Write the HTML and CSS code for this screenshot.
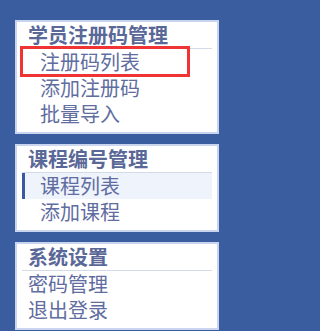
FILE: index.html
```html
<!DOCTYPE html>
<html lang="zh">
<head>
<meta charset="utf-8">
<title>菜单</title>
<link rel="stylesheet" href="styles.css">
</head>
<body>
<div class="sidebar">
  <div class="menu-box">
    <div class="menu-title">学员注册码管理</div>
    <ul class="menu-list">
      <li class="menu-item">注册码列表</li>
      <li class="menu-item">添加注册码</li>
      <li class="menu-item">批量导入</li>
    </ul>
    <span class="mark"></span>
  </div>
  <div class="menu-box">
    <div class="menu-title">课程编号管理</div>
    <ul class="menu-list">
      <li class="menu-item active">课程列表</li>
      <li class="menu-item">添加课程</li>
    </ul>
  </div>
  <div class="menu-box">
    <div class="menu-title">系统设置</div>
    <ul class="menu-list flat">
      <li class="menu-item">密码管理</li>
      <li class="menu-item">退出登录</li>
    </ul>
  </div>
</div>
</body>
</html>
```
FILE: styles.css
```css
html, body {
  margin: 0;
  padding: 0;
  background: #3a5d9f;
  height: 100%;
}
body {
  font-family: "Noto Sans CJK SC", "Noto Sans", sans-serif;
  font-size: 20px;
  overflow: hidden;
}
.sidebar {
  display: flex;
  flex-direction: column;
  gap: 10px;
  padding: 20px 0 0 15px;
  width: 204px;
}
.menu-box {
  position: relative;
  background: #ffffff;
  border: 2px solid #c9d5ee;
  padding: 0 5px 5px;
}
.menu-title {
  font-weight: bold;
  color: #5a6898;
  line-height: 26px;
  padding-left: 6px;
  border-bottom: 1px solid #d3dae8;
}
.menu-list {
  list-style: none;
  margin: 0;
  padding: 0;
}
.menu-item {
  color: #5f6da0;
  line-height: 26px;
  padding-left: 18px;
}
.menu-item.active {
  background: #eef3fc;
  border-left: 3px solid #3a5aa0;
  padding-left: 15px;
}
.flat .menu-item {
  padding-left: 6px;
}
.mark {
  position: absolute;
  left: 3px;
  top: 24px;
  width: 170px;
  height: 31px;
  box-sizing: border-box;
  border: 3px solid #f03434;
}
```
